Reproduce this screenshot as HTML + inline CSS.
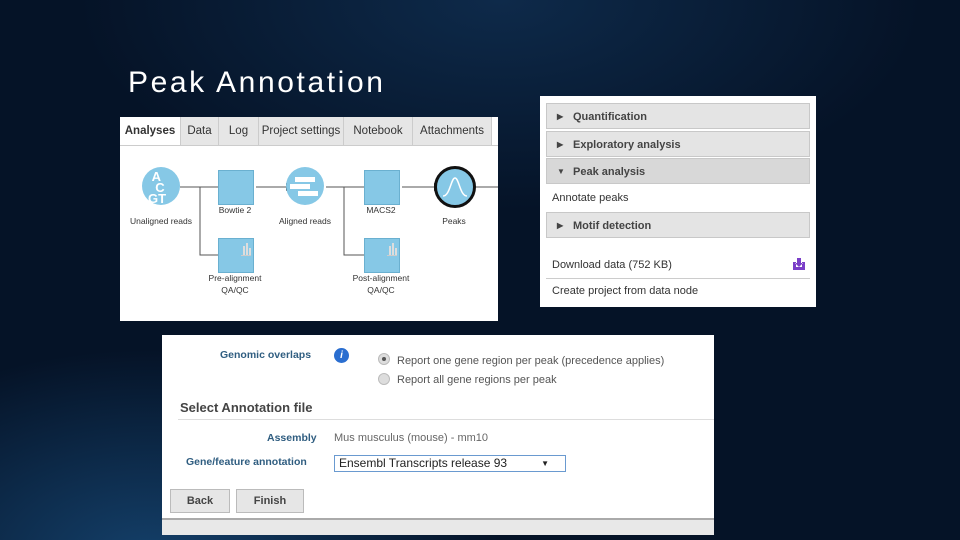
<!DOCTYPE html>
<html><head><style>
body{margin:0;width:960px;height:540px;overflow:hidden;position:relative;font-family:"Liberation Sans",sans-serif;
background:radial-gradient(ellipse 500px 300px at 150px 560px,#14406a 0%,rgba(10,40,80,0) 70%),radial-gradient(ellipse 600px 300px at 500px 0px,#0e2a4a 0%,rgba(10,30,60,0) 70%),#051327;}
.a{position:absolute}
.t{position:absolute;font-size:11px;color:#333;white-space:nowrap}
.tab{position:absolute;top:0;height:28px;line-height:28px;font-size:11.5px;color:#333;text-align:center;border-right:1px solid #ccc;background:#e6e6e6}
.sq{position:absolute;width:34px;height:33px;background:#86c8e6;border:1px solid #6ab0d0}
.ci{position:absolute;width:38px;height:38px;border-radius:50%;background:#86c8e6}
.lbl{position:absolute;font-size:8.5px;color:#333;text-align:center;width:80px;line-height:12px}
.hd{position:absolute;left:6px;width:264px;height:26px;background:#e4e4e4;border:1px solid #c8c8c8;font-size:11px;font-weight:bold;color:#444;line-height:26px;padding-left:26px;box-sizing:border-box}
.hd span{position:absolute;left:10px;font-size:8px}
</style></head><body>
<div class="a" style="left:128px;top:66px;font-size:30px;color:#fff;letter-spacing:2.6px">Peak Annotation</div>

<div class="a" style="left:120px;top:117px;width:378px;height:204px;background:#fff;overflow:hidden">
 <div class="a" style="left:0;top:0;width:378px;height:28px;background:#fff;border-bottom:1px solid #ccc"></div>
 <div class="tab" style="left:0;width:60px;background:#fff;font-weight:bold">Analyses</div>
 <div class="tab" style="left:61px;width:37px">Data</div>
 <div class="tab" style="left:99px;width:39px">Log</div>
 <div class="tab" style="left:139px;width:84px">Project settings</div>
 <div class="tab" style="left:224px;width:68px">Notebook</div>
 <div class="tab" style="left:293px;width:78px">Attachments</div>
 <svg class="a" style="left:0;top:0" width="378" height="204">
  <g stroke="#555" fill="none" stroke-width="1">
   <path d="M60 70H98M80 70V138H98M136 70H166M206 70H244M224 70V138H244M282 70H314M354 70H378"/>
  </g>
  <g fill="#222"><path d="M98 66l4 4-4 4zM166 66l4 4-4 4zM244 66l4 4-4 4zM98 134l4 4-4 4zM244 134l4 4-4 4zM314 66l4 4-4 4z"/></g>
 </svg>
 <div class="ci" style="left:22px;top:50px"></div>
 <div class="a" style="left:28px;top:54px;color:#fff;font-weight:bold;font-size:13px;line-height:11px">&nbsp;A<br>&nbsp;&nbsp;C<br>GT</div>
 <div class="sq" style="left:98px;top:53px"></div>
 <div class="ci" style="left:166px;top:50px"></div>
 <div class="a" style="left:175px;top:60px;width:20px;height:5px;background:#fff"></div>
 <div class="a" style="left:170px;top:67px;width:20px;height:5px;background:#fff"></div>
 <div class="a" style="left:178px;top:74px;width:20px;height:5px;background:#fff"></div>
 <div class="sq" style="left:244px;top:53px"></div>
 <div class="ci" style="left:314px;top:49px;border:3px solid #111;width:36px;height:36px"></div>
 <svg class="a" style="left:320px;top:55px" width="30" height="30"><path d="M3 24C10 24 11 6 15 6S20 24 27 24" stroke="#fff" fill="none" stroke-width="1.5"/></svg>
 <div class="sq" style="left:98px;top:121px"></div>
 <div class="sq" style="left:244px;top:121px"></div>
 <div class="a" style="left:121px;top:126px;width:10px;height:12px;border-bottom:1px solid #ccc"><div class="a" style="left:2px;top:3px;width:2px;height:9px;background:#ddd"></div><div class="a" style="left:5px;top:0;width:2px;height:12px;background:#ddd"></div><div class="a" style="left:8px;top:5px;width:2px;height:7px;background:#ddd"></div></div>
 <div class="a" style="left:267px;top:126px;width:10px;height:12px;border-bottom:1px solid #ccc"><div class="a" style="left:2px;top:3px;width:2px;height:9px;background:#ddd"></div><div class="a" style="left:5px;top:0;width:2px;height:12px;background:#ddd"></div><div class="a" style="left:8px;top:5px;width:2px;height:7px;background:#ddd"></div></div>
 <div class="lbl" style="left:1px;top:98px">Unaligned reads</div>
 <div class="lbl" style="left:75px;top:87px">Bowtie 2</div>
 <div class="lbl" style="left:145px;top:98px">Aligned reads</div>
 <div class="lbl" style="left:221px;top:87px">MACS2</div>
 <div class="lbl" style="left:294px;top:98px">Peaks</div>
 <div class="lbl" style="left:75px;top:155px">Pre-alignment<br>QA/QC</div>
 <div class="lbl" style="left:221px;top:155px">Post-alignment<br>QA/QC</div>
</div>

<div class="a" style="left:540px;top:96px;width:276px;height:211px;background:#fff">
 <div class="hd" style="top:7px"><span>▶</span>Quantification</div>
 <div class="hd" style="top:35px"><span>▶</span>Exploratory analysis</div>
 <div class="hd" style="top:62px;background:#d8d8d8"><span>▼</span>Peak analysis</div>
 <div class="t" style="left:12px;top:96px">Annotate peaks</div>
 <div class="hd" style="top:116px"><span>▶</span>Motif detection</div>
 <div class="t" style="left:12px;top:163px">Download data (752 KB)</div>
 <svg class="a" style="left:252px;top:161px" width="14" height="14"><path d="M1 5v8h12V5h-3v5H4V5z M5 1h4v5h2l-4 4-4-4h2z" fill="#7a3ec8"/></svg>
 <div class="a" style="left:6px;top:182px;width:264px;height:1px;background:#ccc"></div>
 <div class="t" style="left:12px;top:189px">Create project from data node</div>
</div>

<div class="a" style="left:162px;top:335px;width:552px;height:198px;background:#fff">
 <div class="t" style="left:58px;top:14px;color:#2f5d80;font-weight:bold;font-size:10.5px">Genomic overlaps</div>
 <div class="a" style="left:172px;top:13px;width:15px;height:15px;border-radius:50%;background:#2a6ed0;color:#fff;font-size:10px;font-style:italic;font-weight:bold;text-align:center;line-height:15px">i</div>
 <div class="a" style="left:216px;top:18px;width:10px;height:10px;border-radius:50%;background:#ddd;border:1px solid #bbb"><div class="a" style="left:3px;top:3px;width:4px;height:4px;border-radius:50%;background:#555"></div></div>
 <div class="t" style="left:235px;top:20px;color:#555">Report one gene region per peak (precedence applies)</div>
 <div class="a" style="left:216px;top:38px;width:10px;height:10px;border-radius:50%;background:#ddd;border:1px solid #bbb"></div>
 <div class="t" style="left:235px;top:39px;color:#555">Report all gene regions per peak</div>
 <div class="t" style="left:18px;top:65px;font-size:13px;font-weight:bold;color:#444">Select Annotation file</div>
 <div class="a" style="left:16px;top:84px;width:536px;height:1px;background:#ddd"></div>
 <div class="t" style="left:105px;top:97px;color:#2f5d80;font-weight:bold;font-size:10.5px">Assembly</div>
 <div class="t" style="left:172px;top:97px;color:#666">Mus musculus (mouse) - mm10</div>
 <div class="t" style="left:24px;top:121px;color:#2f5d80;font-weight:bold;font-size:10.5px">Gene/feature annotation</div>
 <div class="a" style="left:172px;top:120px;width:232px;height:17px;border:1px solid #6a9ad0;box-sizing:border-box;font-size:12px;color:#222;line-height:15px;padding-left:4px">Ensembl Transcripts release 93<span style="position:absolute;right:16px;font-size:8px">▼</span></div>
 <div class="a" style="left:8px;top:154px;width:58px;height:22px;background:#e6e6e6;border:1px solid #bbb;font-size:11px;font-weight:bold;color:#444;text-align:center;line-height:22px">Back</div>
 <div class="a" style="left:74px;top:154px;width:66px;height:22px;background:#e6e6e6;border:1px solid #bbb;font-size:11px;font-weight:bold;color:#444;text-align:center;line-height:22px">Finish</div>
 <div class="a" style="left:0;top:183px;width:552px;height:15px;background:#e8e8e8;border-top:2px solid #aaa"></div>
</div>
</body></html>
